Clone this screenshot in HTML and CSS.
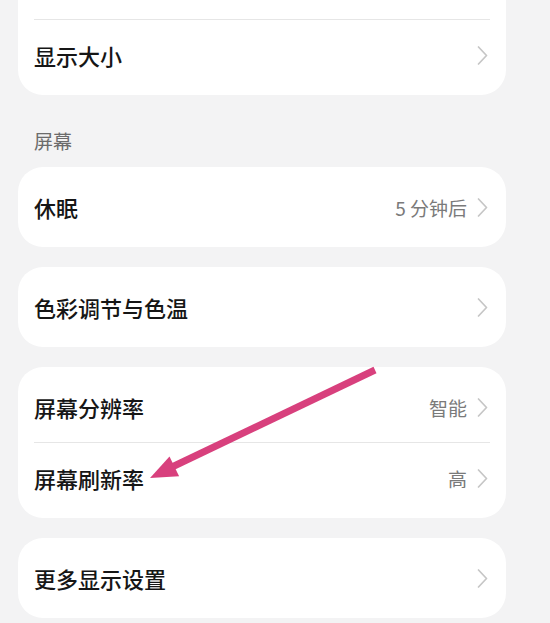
FILE: index.html
```html
<!DOCTYPE html>
<html lang="zh-CN">
<head>
<meta charset="utf-8">
<link rel="stylesheet" href="styles.css">
</head>
<body>
<div class="page">
  <div class="card first">
    <div class="row"></div>
    <div class="divider"></div>
    <div class="row"><span class="title">显示大小</span><span class="right"><svg class="chev" viewBox="0 0 11 19"><path d="M1.5 1 L9.5 9.5 L1.5 18"/></svg></span></div>
  </div>
  <div class="section">屏幕</div>
  <div class="card">
    <div class="row"><span class="title">休眠</span><span class="right"><span class="value">5 分钟后</span><svg class="chev" viewBox="0 0 11 19"><path d="M1.5 1 L9.5 9.5 L1.5 18"/></svg></span></div>
  </div>
  <div class="card">
    <div class="row"><span class="title">色彩调节与色温</span><span class="right"><svg class="chev" viewBox="0 0 11 19"><path d="M1.5 1 L9.5 9.5 L1.5 18"/></svg></span></div>
  </div>
  <div class="card">
    <div class="row"><span class="title">屏幕分辨率</span><span class="right"><span class="value">智能</span><svg class="chev" viewBox="0 0 11 19"><path d="M1.5 1 L9.5 9.5 L1.5 18"/></svg></span></div>
    <div class="divider"></div>
    <div class="row"><span class="title">屏幕刷新率</span><span class="right"><span class="value">高</span><svg class="chev" viewBox="0 0 11 19"><path d="M1.5 1 L9.5 9.5 L1.5 18"/></svg></span></div>
  </div>
  <div class="card">
    <div class="row"><span class="title">更多显示设置</span><span class="right"><svg class="chev" viewBox="0 0 11 19"><path d="M1.5 1 L9.5 9.5 L1.5 18"/></svg></span></div>
  </div>
</div>
<svg class="arrow" viewBox="0 0 550 623" width="550" height="623">
  <line x1="375" y1="370" x2="172" y2="467" stroke="#d8407d" stroke-width="7"/>
  <polygon points="150,478 169.5,456.4 179.1,476.2" fill="#d8407d"/>
</svg>
</body>
</html>
```
FILE: styles.css
```css
html, body {
  margin: 0;
  padding: 0;
}
body {
  width: 550px;
  height: 623px;
  overflow: hidden;
  background: #f3f3f4;
  font-family: "Noto Sans CJK SC", "Noto Sans", sans-serif;
  position: relative;
}
.page {
  padding-left: 18px;
  width: 488px;
  display: flex;
  flex-direction: column;
}
.card {
  background: #ffffff;
  border-radius: 25px;
  padding: 5px 0;
  margin-bottom: 20px;
}
.card.first {
  margin-top: -56px;
  margin-bottom: 0;
}
.row {
  height: 70px;
  display: flex;
  align-items: center;
  justify-content: space-between;
  padding: 0 18px 0 16px;
}
.title {
  font-size: 22px;
  font-weight: 500;
  color: #161616;
  line-height: 1;
}
.right {
  display: flex;
  align-items: center;
  gap: 10px;
}
.value {
  font-size: 19px;
  color: #7a7a7a;
  line-height: 1;
}
.chev {
  width: 11px;
  height: 19px;
}
.chev path {
  fill: none;
  stroke: #c6c6c6;
  stroke-width: 1.7;
  stroke-linecap: round;
  stroke-linejoin: round;
}
.divider {
  height: 1px;
  background: #e6e6e6;
  margin: 0 16px;
}
.section {
  padding: 34px 0 14px 16px;
  line-height: 24px;
  font-size: 19px;
  color: #6b6b6b;
}
.arrow {
  position: absolute;
  top: 0;
  left: 0;
  pointer-events: none;
}
```
